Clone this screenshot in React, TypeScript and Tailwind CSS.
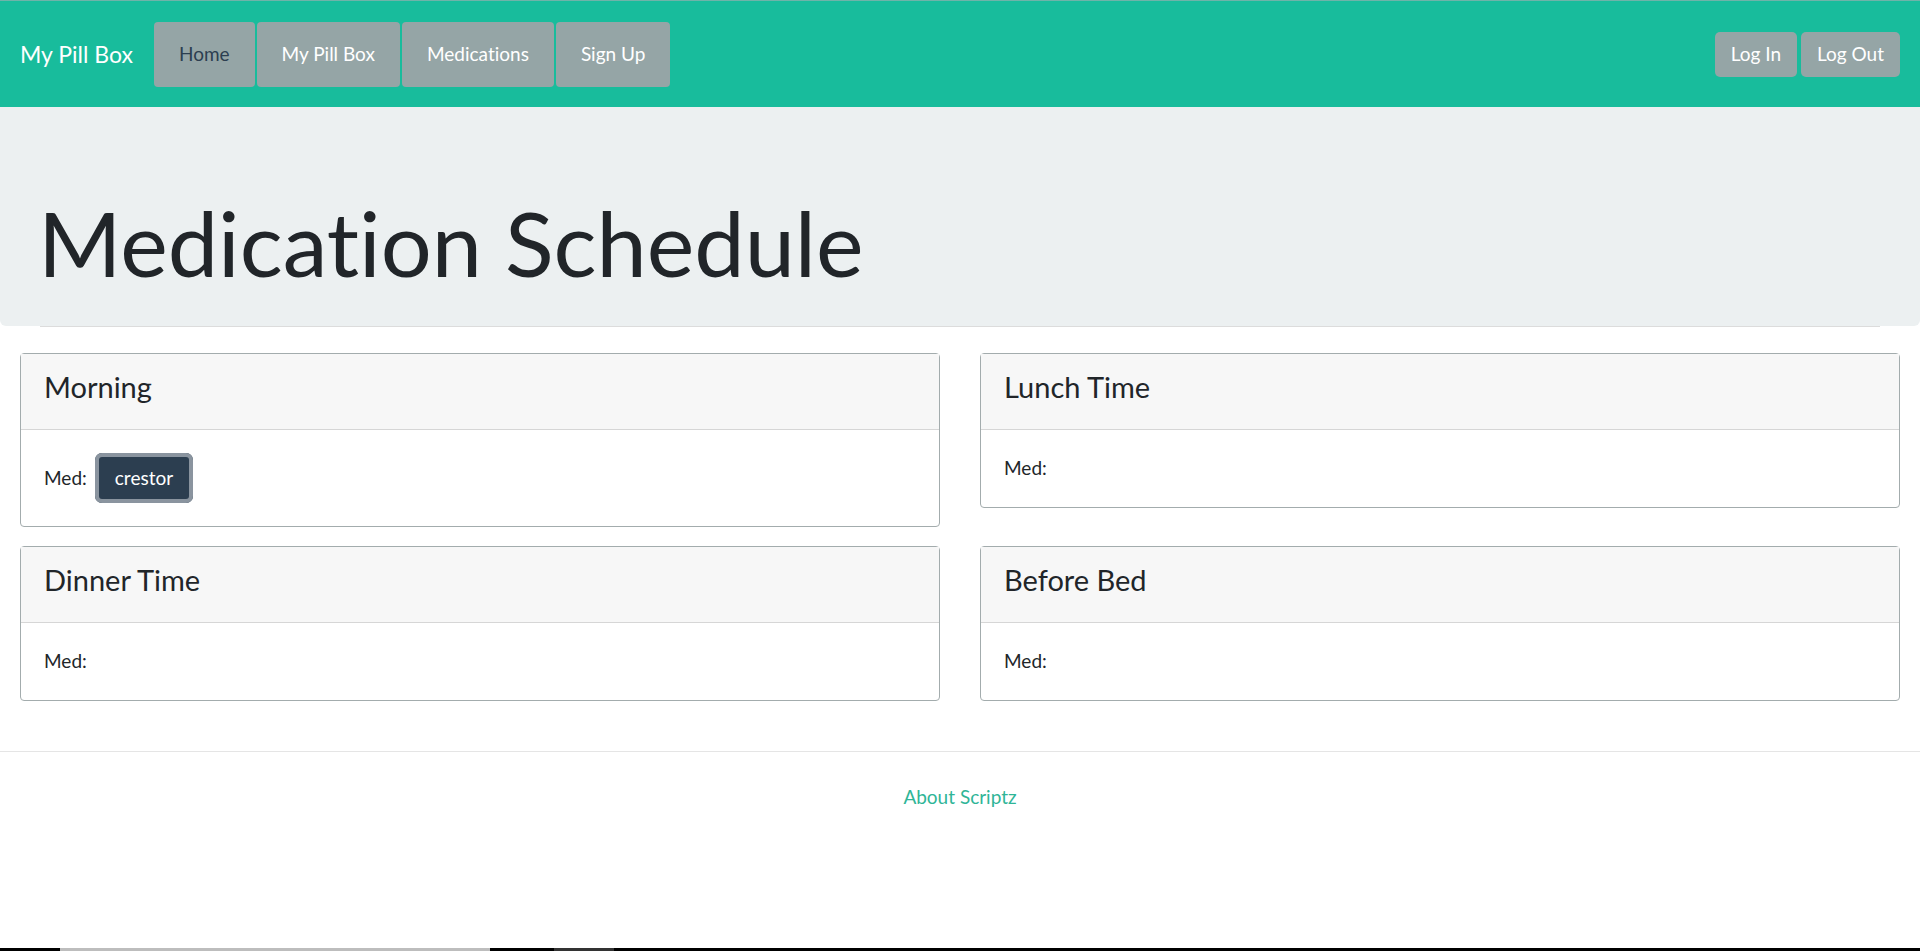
const navLinks = [
  { label: 'Home', active: true },
  { label: 'My Pill Box', active: false },
  { label: 'Medications', active: false },
  { label: 'Sign Up', active: false },
]

const slots = [
  { title: 'Morning', meds: ['crestor'] },
  { title: 'Lunch Time', meds: [] as string[] },
  { title: 'Dinner Time', meds: [] as string[] },
  { title: 'Before Bed', meds: [] as string[] },
]

function Slot({ title, meds }: { title: string; meds: string[] }) {
  return (
    <div className="rounded-[4px] border border-[#a3acad] bg-white">
      <div className="flex h-[76px] items-center border-b border-[#d6d6d6] bg-[#f7f7f7] px-[23px] pb-[9px] text-[29px] text-[#212529]">
        {title}
      </div>
      <div className="px-[23px] py-[23px] text-[19px] text-[#212529]">
        <div className="flex min-h-[31px] items-center gap-[8px]">
          <span>Med:</span>
          {meds.map((m) => (
            <button
              key={m}
              className="h-[50px] rounded-[7px] bg-[#2c3e50] px-[20px] text-[19px] text-white ring-[4px] ring-[#8a949f] ring-inset outline-none"
            >
              {m}
            </button>
          ))}
        </div>
      </div>
    </div>
  )
}

export default function App() {
  return (
    <div className="flex min-h-screen flex-col bg-white font-['Lato','Liberation_Sans',sans-serif] [font-variant-ligatures:none]">
      <nav className="flex h-[107px] items-center border-t border-[#6fb3a9] bg-[#18bc9c] pl-[20px] pr-[20px]">
        <span className="mr-[21px] text-[23px] text-white">My Pill Box</span>
        <div className="flex gap-[2px]">
          {navLinks.map((l) => (
            <a
              key={l.label}
              className={
                'flex h-[65px] items-center rounded-[4px] bg-[#95a5a6] px-[25px] text-[19px] ' +
                (l.active ? 'text-[#2c3e50]' : 'text-white')
              }
            >
              {l.label}
            </a>
          ))}
        </div>
        <div className="ml-auto flex gap-[4px]">
          <button className="h-[45px] rounded-[5px] bg-[#95a5a6] px-[16px] text-[19px] text-white">Log In</button>
          <button className="h-[45px] rounded-[5px] bg-[#95a5a6] px-[16px] text-[19px] text-white">Log Out</button>
        </div>
      </nav>

      <header className="h-[219px] rounded-b-[6px] bg-[#ecf0f1] px-[38px] pt-[90px]">
        <h1 className="text-[90px] leading-none text-[#212529]">Medication Schedule</h1>
      </header>
      <div className="mx-[40px] h-px bg-[#dcdcdc]" />

      <main className="grid grid-cols-2 items-start gap-x-[40px] gap-y-[19px] px-[20px] pt-[26px]">
        {slots.map((s) => (
          <Slot key={s.title} title={s.title} meds={s.meds} />
        ))}
      </main>

      <footer className="mt-[50px] border-t border-[#e5e5e5] pt-[31px] text-center">
        <a className="text-[19px] text-[#2fb597]">About Scriptz</a>
      </footer>

      <div className="mt-auto flex h-[3px] bg-black">
        <div className="ml-[60px] w-[430px] bg-[#bdbdbd]" />
        <div className="ml-[64px] w-[60px] bg-[#333]" />
      </div>
    </div>
  )
}
